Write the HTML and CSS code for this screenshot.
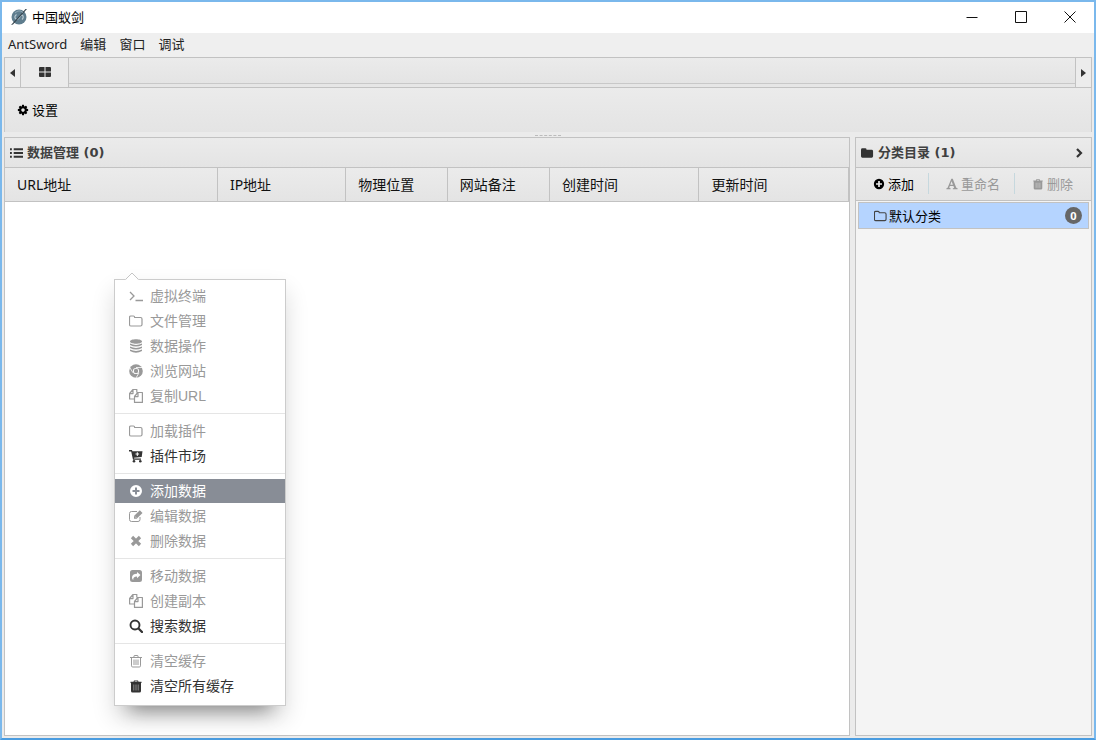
FILE: index.html
```html
<!DOCTYPE html>
<html lang="zh-CN">
<head>
<meta charset="utf-8">
<title>中国蚁剑</title>
<link rel="stylesheet" href="styles.css">
</head>
<body>
<svg class="sprite" aria-hidden="true">
  <symbol id="folder-o" viewBox="0 0 14 14"><path d="M.5 3.300q0-1.300 1.300-1.300h2.600q1.200 0 1.300 1.500h5.800q1.500 0 1.500 1.500v5.500q0 1.500-1.500 1.500H2Q.5 12 .5 10.500z" fill="none" stroke="currentColor" stroke-width="1.200"/></symbol>
  <symbol id="folder" viewBox="0 0 14 14"><path d="M0 3.500Q0 2 1.500 2h3Q6 2 6 3.500h5.500q1.500 0 1.500 1.500v5.500q0 1.500-1.500 1.500h-10Q0 12 0 10.500z"/></symbol>
  <symbol id="copy" viewBox="0 0 14 14"><path d="M5 10H.6V4.500l3.400-4h3.800v3M4 .6v4H.6M5.500 7.500l3.300-4h4.600v9.900H5.500zM9 3.600v4H5.500" fill="none" stroke="currentColor" stroke-width="1.200" stroke-linejoin="round"/></symbol>
  <symbol id="plus" viewBox="0 0 14 14"><path fill-rule="evenodd" d="M7 1a6 6 0 1 1 0 12A6 6 0 1 1 7 1zM6 3.500V6H3.500v2H6v2.500h2V8h2.500V6H8V3.500z"/></symbol>
  <symbol id="trash" viewBox="0 0 14 14"><path fill-rule="evenodd" d="M4.500 2.800 5 1.500h4l.5 1.300H12.500v1.200H12V12q0 1.500-1.500 1.500h-7Q2 13.500 2 12V4h-.5V2.800zM5.500 2.800h3l-.3-.6H5.800z"/><path d="M4.800 5.500v6M7 5.500v6M9.200 5.500v6" stroke="#fff" stroke-opacity=".55" stroke-width=".8"/></symbol>
  <symbol id="trash-o" viewBox="0 0 14 14"><path d="M1 3.500h12M4.700 3.300 5.300 1.500h3.400l.6 1.800M2.500 3.500v8.300q0 1.200 1.200 1.200h6.600q1.200 0 1.200-1.200V3.500M5 5.500v5.500M7 5.500v5.500M9 5.500v5.500" fill="none" stroke="currentColor"/></symbol>
</svg>
<div class="window">
  <header class="titlebar">
    <svg class="logo" viewBox="0 0 18 18"><circle cx="9" cy="9" r="7.500" fill="#5f7d8e"/><path d="M6.500 6.500q-3 2.500-.5 4.500 2 1 3.500-1.500T12 7q2.500 1.500 0 4.500" fill="none" stroke="#b9c9d2" stroke-width="1.200"/><path d="M1 17 15.500 1 17 1 3 16.500z" fill="#35434c"/><path d="M5 5q4-4 8-.5" fill="none" stroke="#91a8b5"/></svg>
    <h1 class="title">中国蚁剑</h1>
    <div class="controls">
      <button aria-label="最小化"><svg viewBox="0 0 12 12"><path d="M.5 6.500h11"/></svg></button>
      <button aria-label="最大化"><svg viewBox="0 0 12 12"><path d="M.5.5h11v11H.5z"/></svg></button>
      <button aria-label="关闭"><svg viewBox="0 0 12 12"><path d="m.5.5 11 11m0-11-11 11"/></svg></button>
    </div>
  </header>
  <nav class="menubar">
    <button>AntSword</button><button>编辑</button><button>窗口</button><button>调试</button>
  </nav>
  <main class="workspace">
    <div class="tabbar">
      <button class="arrow" aria-label="向左"><svg viewBox="0 0 5 8"><path d="M5 0v8L0 4z"/></svg></button>
      <button class="tab" aria-label="主页"><svg viewBox="0 0 12 10"><path d="M1 0h4.500v4.500H0V1q0-1 1-1zM6.500 0H11q1 0 1 1v3.500H6.500zM0 5.500h5.500V10H1q-1 0-1-1zM6.500 5.500H12V9q0 1-1 1H6.500z"/></svg></button>
      <div class="strip"></div>
      <button class="arrow arrow-right" aria-label="向右"><svg viewBox="0 0 5 8"><path d="M0 0v8l5-4z"/></svg></button>
    </div>
    <div class="ribbon">
      <button class="tool"><svg viewBox="0 0 1792 1792"><path d="M1152 896q0-106-75-181t-181-75-181 75-75 181 75 181 181 75 181-75 75-181zm512-109v222q0 12-8 23t-20 13l-185 28q-19 54-39 91 35 50 107 138 10 12 10 25t-9 23q-27 37-99 108t-94 71q-12 0-26-9l-138-108q-44 23-91 38-16 136-29 186-7 28-36 28h-222q-14 0-24.500-8.500t-11.500-21.500l-28-184q-49-16-90-37l-141 107q-10 9-25 9-14 0-25-11-126-114-165-168-7-10-7-23 0-12 8-23 15-21 51-66.500t54-70.500q-27-50-41-99l-183-27q-13-2-21-12.500t-8-23.500v-222q0-12 8-23t19-13l186-28q14-46 39-92-40-57-107-138-10-12-10-24 0-10 9-23 26-36 98.500-107.500t94.500-71.500q13 0 26 10l138 107q44-23 91-38 16-136 29-186 7-28 36-28h222q14 0 24.500 8.500t11.500 21.500l28 184q49 16 90 37l142-107q9-9 24-9 13 0 25 10 129 119 165 170 7 8 7 22 0 12-8 23-15 21-51 66.500t-54 70.500q26 50 41 98l183 28q13 2 21 12.500t8 23.500z"/></svg>设置</button>
    </div>
    <div class="splitter"></div>
    <div class="panels">
      <section class="panel data">
        <h2 class="panel-head"><svg viewBox="0 0 14 14"><path d="M0 2h2v2H0zm4 0h10v2H4zM0 6h2v2H0zm4 0h10v2H4zM0 10h2v2H0zm4 0h10v2H4z"/></svg>数据管理 (0)</h2>
        <table class="grid">
          <colgroup><col class="c-url"><col class="c-ip"><col class="c-loc"><col class="c-note"><col class="c-time"><col class="c-time"></colgroup>
          <thead><tr><th>URL地址</th><th>IP地址</th><th>物理位置</th><th>网站备注</th><th>创建时间</th><th>更新时间</th></tr></thead>
        </table>
      </section>
      <aside class="panel side">
        <h2 class="panel-head"><svg><use href="#folder"/></svg>分类目录 (1)<svg class="chevron" viewBox="0 0 10 12"><path d="m2 2 4 4-4 4" fill="none" stroke="currentColor" stroke-width="2.200"/></svg></h2>
        <div class="toolbar">
          <button class="tool"><svg><use href="#plus"/></svg>添加</button>
          <button class="tool" disabled><svg viewBox="0 0 14 14"><path fill-rule="evenodd" d="M6.200 1h1.700l4.100 10.500 1.500.5v1H8v-1l1.500-.4L8.700 9.300H4.500l-.8 2.200 1.600.5v1H.5v-1l1.400-.5zM6.500 3.800 5 8h3.100z"/></svg>重命名</button>
          <button class="tool" disabled><svg><use href="#trash"/></svg>删除</button>
        </div>
        <ul class="categories"><li><button class="category"><svg><use href="#folder-o"/></svg><span>默认分类</span><span class="badge">0</span></button></li></ul>
      </aside>
    </div>
  </main>
</div>
<div class="context" role="menu">
  <svg class="pointer" viewBox="0 0 14 8"><path d="M0 7.500h1l6-6.500 6 6.500h1V8H0z" fill="#fff"/><path d="m.5 7.500 6.500-6.500 6.500 6.500" fill="none" stroke="#c5c5c5"/></svg>
  <div class="group">
    <button disabled><svg viewBox="0 0 14 14"><path d="m1 3 4 4-4 4M6.500 11.500H14" fill="none" stroke="currentColor" stroke-width="1.300"/></svg>虚拟终端</button>
    <button disabled><svg><use href="#folder-o"/></svg>文件管理</button>
    <button disabled><svg viewBox="0 0 14 14"><path d="M1 2.500C1-.5 13-.5 13 2.500S1 5.500 1 2.500zM1 4.500q6 2.800 12 0V6Q7 9 1 6zM1 7.500q6 2.800 12 0V9q-6 3-12 0zM1 10.500q6 2.800 12 0V12q-6 3.500-12 0z"/></svg>数据操作</button>
    <button disabled><svg viewBox="0 0 14 14"><circle cx="7" cy="7" r="6.800"/><path d="M7 3.500h6M4 8.800.9 3.700M10 8.800 7 14" stroke="#fff" stroke-width=".8"/><circle cx="7" cy="7" r="3.100" fill="#fff"/><circle cx="7" cy="7" r="2.200"/></svg>浏览网站</button>
    <button disabled><svg><use href="#copy"/></svg>复制URL</button>
  </div>
  <div class="group">
    <button disabled><svg><use href="#folder-o"/></svg>加载插件</button>
    <button><svg viewBox="0 0 14 14"><path fill-rule="evenodd" d="M0 1h3l.4 1.300H13.500L12.700 8 5 8.700l.2.800H12v1.300H4L2.200 2.500H0zM7.800 3.300v1.300H6.500v1h1.300V7h1V5.600h1.300v-1H8.800V3.300z"/><circle cx="5" cy="12.300" r="1.300"/><circle cx="11.300" cy="12.300" r="1.300"/></svg>插件市场</button>
  </div>
  <div class="group">
    <button class="active"><svg><use href="#plus"/></svg>添加数据</button>
    <button disabled><svg viewBox="0 0 14 14"><path d="M11 8v2.500q0 2-2 2H2.500q-2 0-2-2v-6q0-2 2-2H8" fill="none" stroke="currentColor"/><path d="m5 7 5.800-5.800L13.500 4 7.700 9.700H5z"/><path d="M6 7.500 7.200 8.700" stroke="#fff" stroke-width=".7"/></svg>编辑数据</button>
    <button disabled><svg viewBox="0 0 14 14"><path d="m3 3 8 8m0-8-8 8" stroke="currentColor" stroke-width="3.200"/></svg>删除数据</button>
  </div>
  <div class="group">
    <button disabled><svg viewBox="0 0 14 14"><path fill-rule="evenodd" d="M3.500 1h7Q13 1 13 3.500v7q0 2.500-2.500 2.500h-7Q1 13 1 10.500v-7Q1 1 3.500 1zM8 3v1.700Q3 5 3 8.500q0 1.500 1.300 2.500-.6-3.500 3.700-3.500v1.800L11.500 6z"/></svg>移动数据</button>
    <button disabled><svg><use href="#copy"/></svg>创建副本</button>
    <button><svg viewBox="0 0 14 14"><circle cx="6" cy="6" r="4.500" fill="none" stroke="currentColor" stroke-width="1.900"/><path d="m9.500 9.500 3.500 3.500" stroke="currentColor" stroke-width="2.300" stroke-linecap="round"/></svg>搜索数据</button>
  </div>
  <div class="group">
    <button disabled><svg><use href="#trash-o"/></svg>清空缓存</button>
    <button><svg><use href="#trash"/></svg>清空所有缓存</button>
  </div>
</div>
</body>
</html>
```
FILE: styles.css
```css
* { box-sizing: border-box; }

body {
  margin: 0;
  background: #7ab8ec;
  font: 13px/20px "Noto Sans", "Noto Sans CJK SC", sans-serif;
  color: #000;
}

button {
  display: flex;
  align-items: center;
  margin: 0;
  padding: 0;
  border: 0;
  background: none;
  font: inherit;
  color: inherit;
}

svg { flex: none; fill: currentColor; }
.sprite { position: absolute; width: 0; height: 0; }

.window {
  display: flex;
  flex-direction: column;
  min-height: 100vh;
  border: 2px solid #7ab8ec;
  border-bottom: 2px solid #4a9ce0;
  background: #ebebeb;
}

.titlebar {
  display: flex;
  align-items: center;
  height: 31px;
  padding: 0 0 2px 8px;
  background: #fff;
}
.logo { width: 18px; height: 18px; margin-right: 4px; }
.title { flex: 1; margin: 0; font-size: 13px; font-weight: 400; }
.controls { display: flex; }
.controls button { width: 49px; height: 28px; justify-content: center; }
.controls svg { width: 12px; height: 12px; fill: none; stroke: #111; }

.menubar {
  display: flex;
  gap: 13px;
  height: 24px;
  padding: 0 0 2px 6px;
  background: #efefef;
  color: #222;
}

.workspace {
  display: flex;
  flex: 1;
  flex-direction: column;
  padding: 0 2px 2px;
}

.tabbar {
  display: flex;
  height: 31px;
  border: 1px solid #c2c2c2;
  background: #e6e6e6;
  color: #333;
}
.arrow { width: 16px; justify-content: center; border-right: 1px solid #c2c2c2; background: #ececec; }
.arrow-right { border-right: 0; border-left: 1px solid #c2c2c2; }
.arrow svg { width: 5px; height: 8px; }
.tab { width: 48px; justify-content: center; padding-bottom: 2px; border-right: 1px solid #c2c2c2; background: #ebebeb; }
.tab svg { width: 12px; height: 10px; }
.strip { flex: 1; margin-bottom: 3px; border-bottom: 1px solid #c8c8c8; background: linear-gradient(#ebebeb, #e4e4e4); }

.ribbon {
  display: flex;
  height: 44px;
  padding-left: 12px;
  border: solid #c8c8c8;
  border-width: 0 1px;
  background: linear-gradient(#ebebeb, #e4e4e4);
}
.tool { gap: 3px; }
.tool svg { width: 12px; height: 12px; }
.tool:disabled { color: #999; }

.splitter { height: 5px; }
.splitter::before {
  content: "";
  display: block;
  width: 26px;
  height: 3px;
  margin: auto;
  border-bottom: 1px dashed #bbb;
}

.panels { display: flex; flex: 1; gap: 5px; }
.panel { border: 1px solid #c2c2c2; }
.data { flex: 1; background: #fff; }
.side { width: 237px; background: #f4f4f4; }

.panel-head {
  display: flex;
  align-items: center;
  gap: 4px;
  height: 30px;
  margin: 0;
  padding: 0 6px 0 5px;
  border-bottom: 1px solid #c2c2c2;
  background: linear-gradient(#ebebeb, #e4e4e4);
  font-family: "DejaVu Sans", "Noto Sans CJK SC", sans-serif;
  font-size: 13px;
  font-weight: 700;
  color: #404040;
}
.panel-head svg { width: 13px; height: 14px; color: #333; }
.panel-head .chevron { width: 10px; height: 12px; margin-left: auto; }

.grid { width: 100%; border-collapse: separate; border-spacing: 0; table-layout: fixed; }
.grid th {
  height: 34px;
  padding: 0 0 0 12px;
  border: solid #c2c2c2;
  border-width: 0 1px 1px 0;
  background: linear-gradient(#ebebeb, #e4e4e4);
  font-size: 14px;
  font-weight: 400;
  text-align: left;
  color: #111;
}
.c-url { width: 25.2%; }
.c-ip { width: 15.2%; }
.c-loc { width: 12%; }
.c-note { width: 12.1%; }
.c-time { width: 17.7%; }

.toolbar {
  display: flex;
  height: 33px;
  border-bottom: 1px solid #c2c2c2;
  background: linear-gradient(#ebebeb, #e4e4e4);
  padding: 5px 0 6px;
}
.toolbar .tool { padding: 0 14px 0 17px; }
.toolbar .tool + .tool { border-left: 1px solid #c6d8de; }

.categories { margin: 0; padding: 1px 2px; list-style: none; }
.category {
  width: 100%;
  height: 27px;
  padding: 0 6px 0 15px;
  border: 1px solid #c2c2c2;
  background: #b5d4ff;
}
.category svg { width: 13px; height: 14px; margin-right: 2px; color: #444; }
.badge {
  width: 17px;
  height: 17px;
  margin-left: auto;
  border-radius: 9px;
  background: #666;
  color: #fff;
  font-size: 11px;
  font-weight: 700;
  line-height: 17px;
  text-align: center;
}

.context {
  position: absolute;
  left: 114px;
  top: 279px;
  width: 172px;
  padding-bottom: 2px;
  border: 1px solid #ccc;
  background: #fff;
  box-shadow: 0 20px 18px -16px rgba(0, 0, 0, .4), 0 12px 22px rgba(0, 0, 0, .14);
  font: 14px/24px "Liberation Sans", "Noto Sans CJK SC", sans-serif;
  color: #333;
}
.pointer { position: absolute; left: 10px; top: -8px; width: 14px; height: 8px; }
.group { padding: 5px 0; }
.group:first-of-type { padding-top: 4px; }
.group + .group { border-top: 1px solid #e5e5e5; }
.group button { width: 100%; height: 24px; padding-left: 14px; gap: 7px; }
.group button + button { margin-top: 1px; }
.group svg { width: 14px; height: 14px; }
.group button:disabled { color: #999; }
.group .active { background: #888d96; color: #fff; }
```
